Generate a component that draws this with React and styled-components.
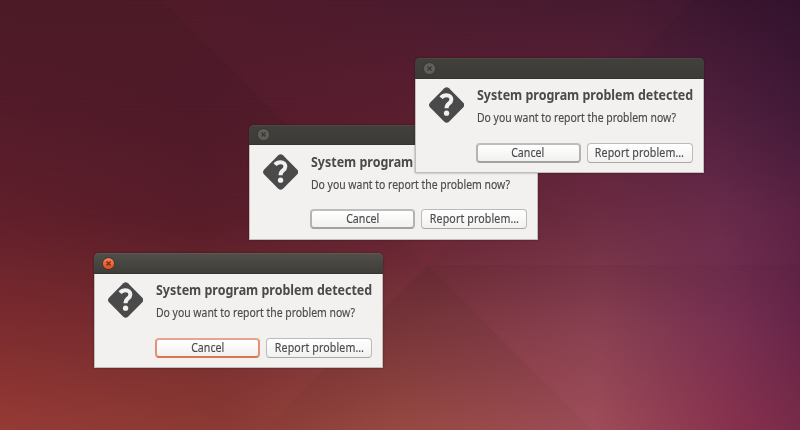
import React from "react";
import styled, { createGlobalStyle, css } from "styled-components";

const GlobalStyle = createGlobalStyle`
  html, body { margin: 0; padding: 0; overflow: hidden; background: #4c1a28; }
  *, *::before, *::after { box-sizing: border-box; }
`;

const Desktop = styled.main`
  position: relative;
  width: 800px;
  height: 430px;
  overflow: hidden;
  font-family: "Noto Sans", "Open Sans", sans-serif;
  color: #4a4a4a;
`;

const GlowBand = styled.div`
  position: absolute;
  inset: 0;
  background: linear-gradient(to right, ${(p) => p.$stops});
  ${(p) =>
    p.$to &&
    css`
      mask-image: linear-gradient(to bottom, transparent ${p.$from}px, black ${p.$to}px);
    `}
`;

const Facets = styled.svg`
  position: absolute;
  inset: 0;
`;

const Window = styled.section`
  position: absolute;
  left: ${(p) => p.$x}px;
  top: ${(p) => p.$y}px;
  width: 289px;
  height: 115px;
  display: flex;
  flex-direction: column;
  border-radius: 5px 5px 0 0;
  box-shadow: 0 0 2px rgba(30, 10, 15, 0.5);
`;

const TitleBar = styled.header`
  height: 20.5px;
  flex: none;
  display: flex;
  align-items: center;
  padding: 0.5px 0 0 8px;
  border-radius: 5px 5px 0 0;
  border-bottom: 1px solid #35342f;
  background: ${(p) =>
    p.$active ? "linear-gradient(#504f49, #3e3d38)" : "linear-gradient(#41403b, #3c3b37)"};
  box-shadow: inset 0 1px 0 ${(p) => (p.$active ? "#5b5a54" : "#4a4944")};
`;

const CloseButton = styled.button`
  display: flex;
  width: 13px;
  height: 13px;
  padding: 0;
  border: 0;
  background: none;
`;

const Body = styled.div`
  flex: 1;
  display: flex;
  padding: 8.5px 10px 0 13px;
  background: #f2f1f0;
  border: 1px solid #c3bdb9;
  border-top: 0;
`;

const Content = styled.div`
  flex: none;
  width: 217px;
  margin-left: 11.7px;
  display: flex;
  flex-direction: column;
`;

const Title = styled.h1`
  width: max-content;
  margin: -1px 0 0 1.3px;
  font-size: 13.8px;
  line-height: 18px;
  font-weight: 700;
  white-space: nowrap;
  transform: scaleX(0.903);
  transform-origin: 0 50%;
`;

const Message = styled.p`
  width: max-content;
  margin: 5px 0 0 1.3px;
  font-size: 12px;
  line-height: 18px;
  white-space: nowrap;
  transform: scaleX(0.868);
  transform-origin: 0 50%;
  -webkit-text-stroke: 0.15px #4a4a4a;
`;

const Actions = styled.div`
  display: flex;
  gap: 6px;
  margin-top: 15.5px;
`;

const Label = styled.span`
  display: inline-block;
  transform: scaleX(0.885);
  -webkit-text-stroke: 0.15px #4a4a4a;
`;

const ActionButton = styled.button`
  flex: none;
  display: flex;
  align-items: center;
  justify-content: center;
  width: ${(p) => (p.$tone === "plain" ? 106.5 : 105)}px;
  height: 20px;
  padding: 0;
  border-radius: 4px;
  font: 12px/16px "Noto Sans", "Open Sans", sans-serif;
  letter-spacing: ${(p) => (p.$tone === "plain" ? 0.15 : 0)}px;
  color: #4a4a4a;
  white-space: nowrap;
  background: linear-gradient(#fff, #f1f1f0);
  border: 1px solid #bdbab7;
  border-bottom-color: #a9a6a3;
  ${(p) =>
    p.$tone === "focus" &&
    css`
      border: 2px solid #e29377;
      border-top-color: #e7a58d;
      border-bottom-color: #dc7650;
    `}
  ${(p) =>
    p.$tone === "default" &&
    css`
      border: 2px solid #b4b3b2;
      border-top-color: #bebdbc;
      border-bottom-color: #a3a2a1;
    `}
`;

function CloseIcon({ active }) {
  return (
    <svg width="13" height="13" viewBox="0 0 13 13">
      <defs>
        <linearGradient id="closeActive" x1="0" y1="0" x2="0" y2="1">
          <stop offset="0" stopColor="#f4805a" />
          <stop offset="1" stopColor="#e34c1c" />
        </linearGradient>
      </defs>
      <circle cx="6.5" cy="6.5" r="6.2" fill={active ? "#33302b" : "#393833"} />
      <circle cx="6.5" cy="6.5" r="5.6" fill={active ? "url(#closeActive)" : "#605f59"} />
      <path
        d="M4.5 4.5l4 4M8.5 4.5l-4 4"
        stroke={active ? "#6b2a17" : "#383732"}
        strokeWidth="1.3"
        fill="none"
      />
    </svg>
  );
}

function QuestionIcon() {
  return (
    <svg width="36" height="36" viewBox="0 0 36 36">
      <path
        d="M15.6 1Q18-1 20.4 1L35 15.6Q37 18 35 20.4L20.4 35Q18 37 15.6 35L1 20.4Q-1 18 1 15.6Z"
        fill="#4a4a4a"
      />
      <path
        d="M12.3 10.7C13.6 9.1 15.6 8.1 17.9 8.1C20.9 8.1 22.8 9.9 22.8 12.3C22.8 14.2 21.8 15.3 20.2 16.5C18.6 17.7 17.9 18.6 17.9 21.4"
        fill="none"
        stroke="#f2f1f0"
        strokeWidth="4.1"
      />
      <circle cx="17.9" cy="26.3" r="2.7" fill="#f2f1f0" />
    </svg>
  );
}

function Dialog({ x, y, active }) {
  return (
    <Window $x={x} $y={y}>
      <TitleBar $active={active}>
        <CloseButton aria-label="Close">
          <CloseIcon active={active} />
        </CloseButton>
      </TitleBar>
      <Body>
        <QuestionIcon />
        <Content>
          <Title>System program problem detected</Title>
          <Message>Do you want to report the problem now?</Message>
          <Actions>
            <ActionButton $tone={active ? "focus" : "default"}>
              <Label>Cancel</Label>
            </ActionButton>
            <ActionButton $tone="plain">
              <Label>Report problem…</Label>
            </ActionButton>
          </Actions>
        </Content>
      </Body>
    </Window>
  );
}

const bands = [
  { stops: "#4c1a28, #4d1a28 25%, #471a2c 50%, #431a30 78%, #33122e" },
  { from: 0, to: 110, stops: "#531b29, #4f1a29 25%, #561d2f 50%, #591f37 75%, #4f1f3d 90%, #421a38" },
  { from: 110, to: 215, stops: "#611f2b, #571c29 25%, #612030 50%, #6c2c42 75%, #692b4a 90%, #5c2244" },
  { from: 215, to: 320, stops: "#7b2b2f, #722b2e 25%, #7c363c 50%, #884051 75%, #762f51 92%, #672549" },
  { from: 320, to: 430, stops: "#963a35, #8b3a34 28%, #9a4b43 50%, #9f4d59 74%, #86314d 92%, #782b48" },
];

const dialogs = [
  { x: 93.7, y: 253, active: true },
  { x: 248.7, y: 124.7, active: false },
  { x: 414.6, y: 58, active: false },
];

export default function App() {
  return (
    <>
      <GlobalStyle />
      <Desktop>
        {bands.map((b, i) => (
          <GlowBand key={i} $from={b.from} $to={b.to} $stops={b.stops} />
        ))}
        <Facets width="800" height="430" viewBox="0 0 800 430">
          <defs>
            <linearGradient id="wedge" x1="0" y1="0" x2="0" y2="1">
              <stop offset="0" stopColor="#301a10" stopOpacity=".12" />
              <stop offset="1" stopColor="#301a10" stopOpacity=".03" />
            </linearGradient>
            <linearGradient id="shelf" x1="0" y1="0" x2="0" y2="1">
              <stop offset="0" stopColor="#200810" stopOpacity=".055" />
              <stop offset="1" stopColor="#200810" stopOpacity="0" />
            </linearGradient>
          </defs>
          <path d="M428 265L592 430H264Z" fill="url(#wedge)" />
          <path d="M428 265H800V340H503Z" fill="url(#shelf)" />
          <path d="M163 0L428 265L693 0Z" fill="#ff5a78" opacity=".022" />
        </Facets>
        {dialogs.map((d) => (
          <Dialog key={d.x} {...d} />
        ))}
      </Desktop>
    </>
  );
}
